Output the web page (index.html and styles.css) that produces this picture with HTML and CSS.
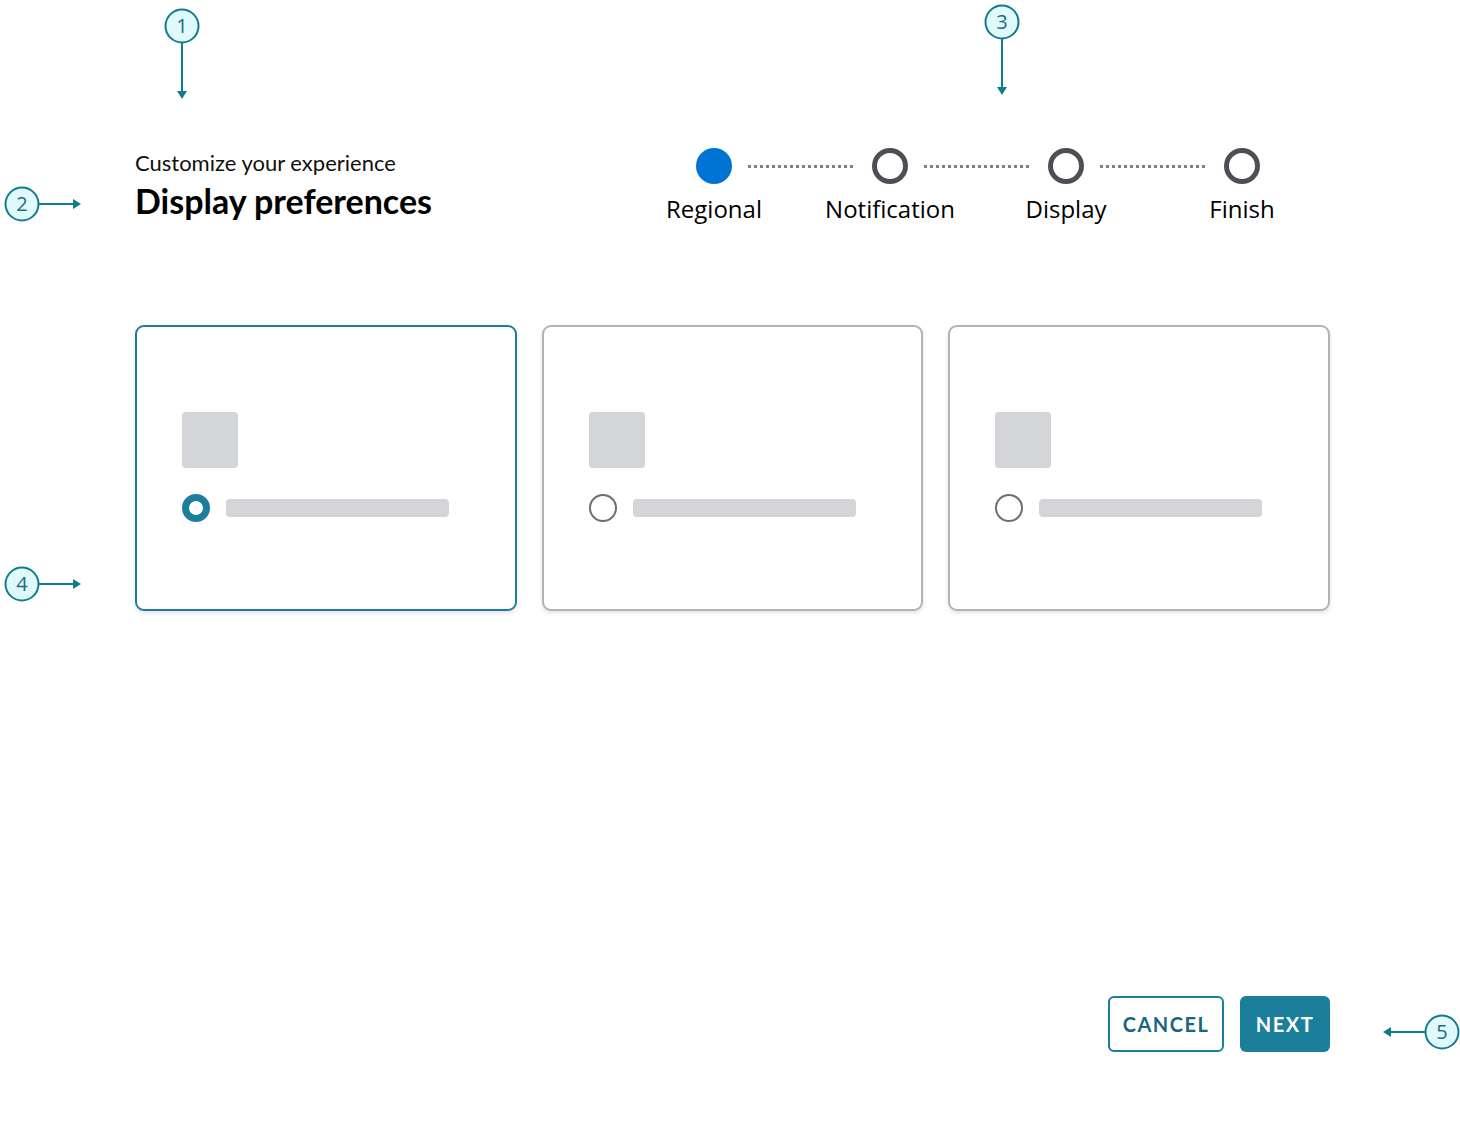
FILE: index.html
```html
<!DOCTYPE html>
<html lang="en">
<head>
<meta charset="utf-8">
<title>Display preferences</title>
<link rel="stylesheet" href="styles.css">
</head>
<body>
<div class="page">
  <header class="header">
    <div class="titles">
      <div class="subtitle">Customize your experience</div>
      <h1 class="title">Display preferences</h1>
    </div>
    <ol class="stepper">
      <li class="step active"><span class="dot"></span><span class="label">Regional</span></li>
      <li class="step"><span class="dot"></span><span class="label">Notification</span></li>
      <li class="step"><span class="dot"></span><span class="label">Display</span></li>
      <li class="step"><span class="dot"></span><span class="label">Finish</span></li>
    </ol>
  </header>

  <section class="cards">
    <div class="card selected">
      <div class="thumb"></div>
      <div class="option"><span class="radio"></span><span class="bar"></span></div>
    </div>
    <div class="card">
      <div class="thumb"></div>
      <div class="option"><span class="radio"></span><span class="bar"></span></div>
    </div>
    <div class="card">
      <div class="thumb"></div>
      <div class="option"><span class="radio"></span><span class="bar"></span></div>
    </div>
  </section>

  <div class="actions">
    <button class="btn btn-outline">CANCEL</button>
    <button class="btn btn-primary">NEXT</button>
  </div>
</div>

<svg class="annotations" width="1460" height="1140" viewBox="0 0 1460 1140">
  <g class="ann-line">
    <line x1="182" y1="43" x2="182" y2="92"/>
    <line x1="39" y1="204" x2="74" y2="204"/>
    <line x1="1002" y1="39" x2="1002" y2="88"/>
    <line x1="39" y1="584" x2="74" y2="584"/>
    <line x1="1425" y1="1032" x2="1390" y2="1032"/>
  </g>
  <g class="ann-head">
    <polygon points="177,91 187,91 182,99"/>
    <polygon points="73,199 73,209 81,204"/>
    <polygon points="997,87 1007,87 1002,95"/>
    <polygon points="73,579 73,589 81,584"/>
    <polygon points="1391,1027 1391,1037 1383,1032"/>
  </g>
  <g class="ann-circle">
    <circle cx="182" cy="26" r="16.5"/>
    <circle cx="22" cy="204" r="16.5"/>
    <circle cx="1002" cy="22" r="16.5"/>
    <circle cx="22" cy="584" r="16.5"/>
    <circle cx="1442" cy="1032" r="16.5"/>
  </g>
  <g class="ann-text">
    <text x="182" y="33">1</text>
    <text x="22" y="211">2</text>
    <text x="1002" y="29">3</text>
    <text x="22" y="591">4</text>
    <text x="1442" y="1039">5</text>
  </g>
</svg>
</body>
</html>
```

FILE: styles.css
```css
html, body {
  margin: 0;
  padding: 0;
  background: #ffffff;
}

body {
  font-family: "Open Sans", "Liberation Sans", sans-serif;
  color: #111111;
  position: relative;
  width: 1460px;
  height: 1140px;
  overflow: hidden;
}

.page {
  width: 1195px;
  padding: 148px 0 0 135px;
}

.header {
  display: flex;
  justify-content: space-between;
  align-items: flex-start;
}

.titles {
  padding-top: 2px;
}

.subtitle {
  font-family: Lato, "Liberation Sans", sans-serif;
  font-size: 22px;
  line-height: 26px;
  color: #111;
}

.title {
  margin: 5px 0 0;
  font-family: Lato, "Liberation Sans", sans-serif;
  font-weight: 700;
  font-size: 34px;
  line-height: 40px;
  color: #000;
}

.stepper {
  list-style: none;
  margin: 0;
  padding: 0;
  display: grid;
  grid-template-columns: repeat(4, 176px);
}

.step {
  position: relative;
  display: flex;
  flex-direction: column;
  align-items: center;
}

.step:not(:last-child)::after {
  content: "";
  position: absolute;
  top: 17px;
  left: 122px;
  width: 108px;
  height: 3px;
  background: repeating-linear-gradient(to right, #7b7e82 0 3px, transparent 3px 6px);
}

.dot {
  width: 36px;
  height: 36px;
  box-sizing: border-box;
  border-radius: 50%;
  border: 5px solid #4c4f54;
  background: #fff;
}

.step.active .dot {
  border: none;
  background: #0074d4;
}

.label {
  margin-top: 9px;
  font-size: 24px;
  font-weight: 500;
  line-height: 32px;
  color: #000;
  white-space: nowrap;
}

.cards {
  margin-top: 100px;
  display: grid;
  grid-template-columns: repeat(3, 1fr);
  gap: 25px;
  width: 1195px;
}

.card {
  height: 286px;
  box-sizing: border-box;
  border: 2px solid #b3b3b3;
  border-radius: 9px;
  background: #fff;
  box-shadow: 0 2px 4px rgba(0, 0, 0, 0.12);
  padding: 85px 0 0 45px;
}

.card.selected {
  border-color: #1b7f9c;
}

.thumb {
  width: 56px;
  height: 56px;
  border-radius: 4px;
  background: #d4d5d8;
}

.option {
  margin-top: 26px;
  display: flex;
  align-items: center;
  gap: 16px;
}

.radio {
  width: 28px;
  height: 28px;
  box-sizing: border-box;
  border-radius: 50%;
  border: 2px solid #6b6e73;
  background: #fff;
}

.card.selected .radio {
  border: 7px solid #1b7f9c;
}

.bar {
  width: 223px;
  height: 18px;
  border-radius: 4px;
  background: #d4d5d8;
}

.actions {
  margin-top: 385px;
  display: flex;
  justify-content: flex-end;
  gap: 16px;
}

.btn {
  height: 56px;
  box-sizing: border-box;
  border-radius: 6px;
  font-family: Lato, "Liberation Sans", sans-serif;
  font-weight: 700;
  font-size: 20px;
  letter-spacing: 1.5px;
  padding: 0;
  cursor: pointer;
}

.btn-outline {
  width: 116px;
  border: 2px solid #1b7f9c;
  background: #fff;
  color: #1a6680;
}

.btn-primary {
  width: 90px;
  border: none;
  background: #1b7f9c;
  color: #fff;
}

.annotations {
  position: absolute;
  left: 0;
  top: 0;
  pointer-events: none;
}

.ann-line line {
  stroke: #0e7d8c;
  stroke-width: 2;
}

.ann-head polygon {
  fill: #0e7d8c;
}

.ann-circle circle {
  fill: #e2f9fc;
  stroke: #0e7d8c;
  stroke-width: 2;
}

.ann-text text {
  font-family: "Open Sans", "Liberation Sans", sans-serif;
  font-size: 20px;
  font-weight: 400;
  fill: #176e7d;
  text-anchor: middle;
}
```
